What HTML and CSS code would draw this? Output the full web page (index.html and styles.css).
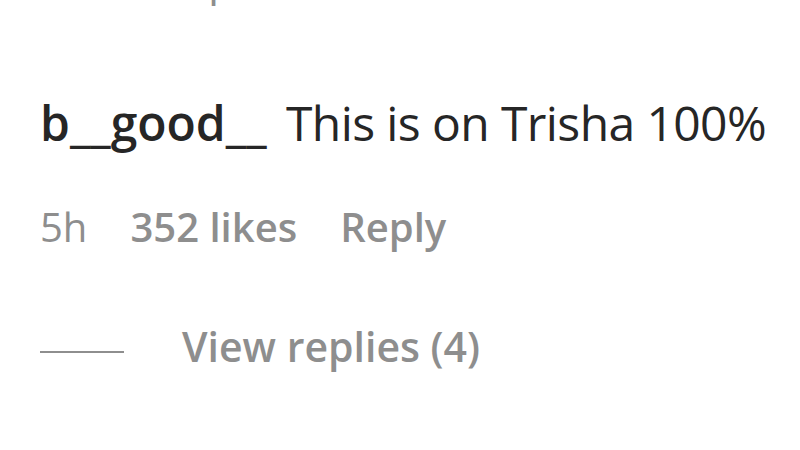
FILE: index.html
```html
<!DOCTYPE html>
<html>
<head>
<meta charset="utf-8">
<link rel="stylesheet" href="styles.css">
</head>
<body>
<div class="prev"><span class="tail">p</span></div>
<div class="comment">
  <div class="body"><span class="user">b__good__</span> <span class="text">This is on Trisha 100%</span></div>
  <div class="meta">
    <span class="time">5h</span>
    <span class="likes">352 likes</span>
    <span class="reply">Reply</span>
  </div>
  <div class="replies">
    <span class="dash"></span>
    <span class="view">View replies (4)</span>
  </div>
</div>
</body>
</html>
```
FILE: styles.css
```css
html, body {
  margin: 0;
  padding: 0;
  background: #ffffff;
  width: 800px;
  height: 450px;
  overflow: hidden;
  font-family: "Open Sans", "Noto Sans", sans-serif;
}
.prev {
  height: 0;
  position: relative;
}
.tail {
  position: absolute;
  left: 208px;
  top: -52px;
  font-size: 44px;
  color: #8e8e8e;
}
.comment {
  padding-left: 40px;
  padding-top: 93px;
}
.body {
  font-size: 48px;
  line-height: 60px;
  color: #262626;
  white-space: nowrap;
}
.user {
  font-weight: 600;
  margin-right: 7px;
}
.text {
  letter-spacing: -0.6px;
}
.meta {
  margin-top: 49px;
  font-size: 40px;
  line-height: 50px;
  color: #8e8e8e;
  display: flex;
  gap: 43px;
}
.likes, .reply {
  font-weight: 600;
}
.replies {
  margin-top: 69px;
  display: flex;
  align-items: center;
  gap: 58px;
}
.dash {
  width: 84px;
  height: 2px;
  margin-top: 12px;
  background: #8e8e8e;
}
.view {
  font-size: 41px;
  line-height: 50px;
  font-weight: 600;
  color: #8e8e8e;
}
```
